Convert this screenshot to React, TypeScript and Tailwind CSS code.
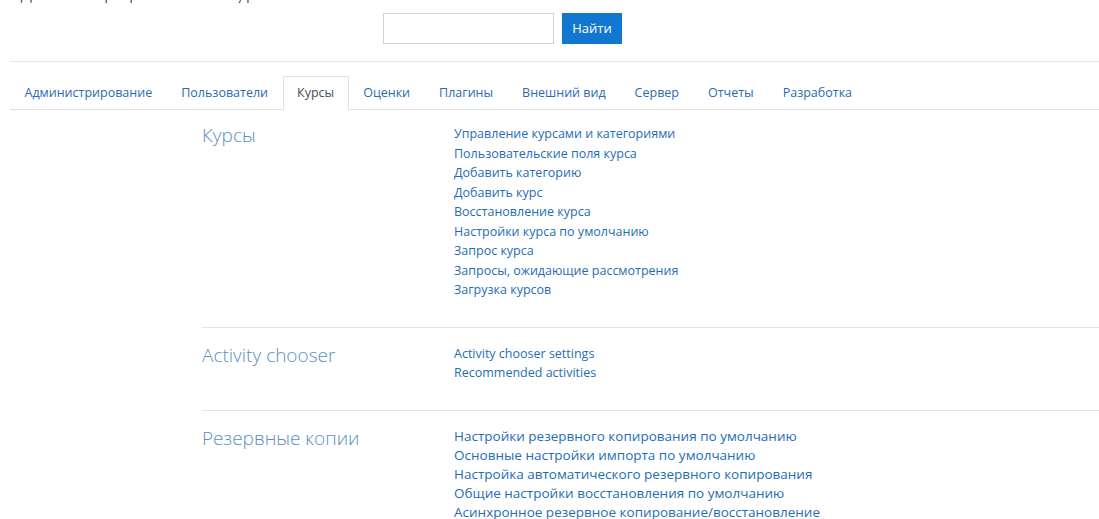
import { useState } from "react";

const tabs = [
  "Администрирование",
  "Пользователи",
  "Курсы",
  "Оценки",
  "Плагины",
  "Внешний вид",
  "Сервер",
  "Отчеты",
  "Разработка",
];

const sections = [
  {
    title: "Курсы",
    big: false,
    links: [
      "Управление курсами и категориями",
      "Пользовательские поля курса",
      "Добавить категорию",
      "Добавить курс",
      "Восстановление курса",
      "Настройки курса по умолчанию",
      "Запрос курса",
      "Запросы, ожидающие рассмотрения",
      "Загрузка курсов",
    ],
  },
  {
    title: "Activity chooser",
    big: false,
    links: ["Activity chooser settings", "Recommended activities"],
  },
  {
    title: "Резервные копии",
    big: true,
    links: [
      "Настройки резервного копирования по умолчанию",
      "Основные настройки импорта по умолчанию",
      "Настройка автоматического резервного копирования",
      "Общие настройки восстановления по умолчанию",
      "Асинхронное резервное копирование/восстановление",
    ],
  },
];

const App = () => {
  const [query, setQuery] = useState("");
  const [active, setActive] = useState("Курсы");

  return (
    <div className="h-[519px] bg-white font-['Open_Sans',_'Noto_Sans',sans-serif] text-[12.5px] overflow-hidden">
      <div className="h-[3px] overflow-hidden">
        <h2 className="ml-[8px] mt-[-20px] text-[21px] leading-[23px] font-light text-[#333]">
          Администрирование: Курсы
        </h2>
      </div>

      <form
        className="flex items-center gap-2 pl-[383px] mt-[10px]"
        onSubmit={(e) => e.preventDefault()}
      >
        <input
          value={query}
          onChange={(e) => setQuery(e.target.value)}
          className="w-[171px] h-[31px] border border-[#ced4da] outline-none px-2"
        />
        <button
          type="submit"
          className="h-[31px] w-[60px] bg-[#1177d1] text-white text-[13px]"
        >
          Найти
        </button>
      </form>

      <div className="ml-[10px] mt-[17px] border-t border-[#e8e8e8]" />

      <ul className="ml-[10px] mt-[14px] flex border-b border-[#dee2e6]">
        {tabs.map((tab) => (
          <li key={tab} className="mb-[-1px]">
            <button
              onClick={() => setActive(tab)}
              className={`h-[34px] px-[13.5px] border ${
                tab === active
                  ? "border-[#dee2e6] border-b-white text-[#495057]"
                  : "border-transparent text-[#2a6bb0]"
              }`}
            >
              {tab}
            </button>
          </li>
        ))}
      </ul>

      <div className="pl-[202px] pt-[14px]">
        {sections.map((s, i) => (
          <div
            key={s.title}
            className={`flex items-start ${
              i > 0 ? "border-t border-[#e5e5e5] pt-[16px]" : ""
            } pb-[27px]`}
          >
            <h3 className="w-[252px] shrink-0 text-[19px] leading-[22px] font-light text-[#5b8fc5]">
              {s.title}
            </h3>
            <ul
              className={
                s.big ? "text-[13.5px] leading-[19px]" : "leading-[19.5px]"
              }
            >
              {s.links.map((l) => (
                <li key={l}>
                  <a href="#" className="text-[#1f6db5]">
                    {l}
                  </a>
                </li>
              ))}
            </ul>
          </div>
        ))}
      </div>
    </div>
  );
};

export default App;
